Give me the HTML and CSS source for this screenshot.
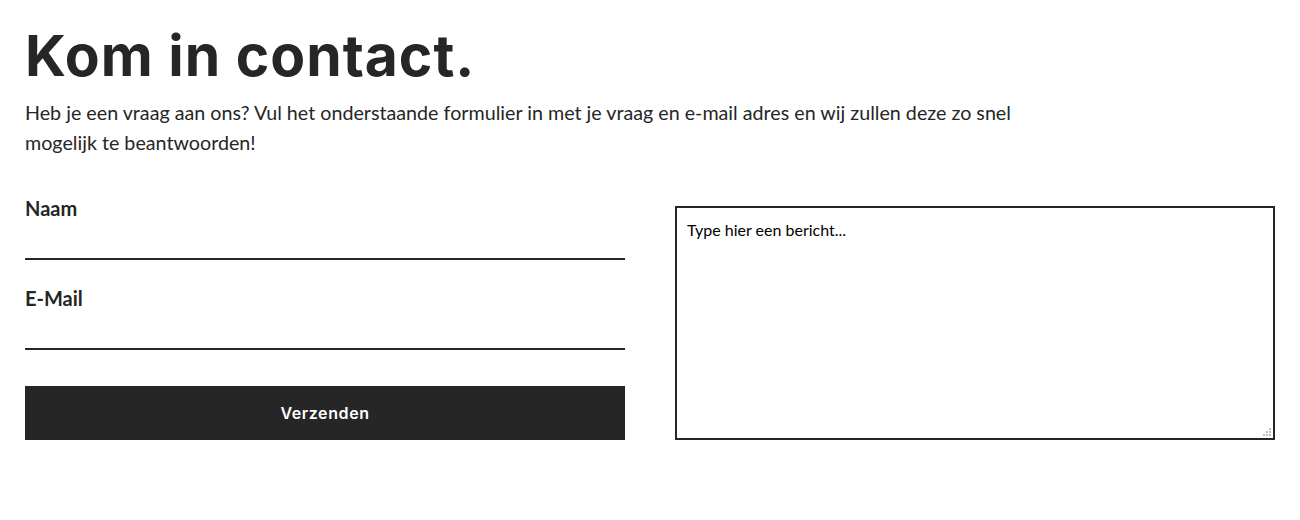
FILE: index.html
```html
<!DOCTYPE html>
<html lang="nl">
<head>
<meta charset="utf-8">
<title>Kom in contact.</title>
<link rel="stylesheet" href="styles.css">
</head>
<body>
<main class="contact">
  <h1 class="title">Kom in contact.</h1>
  <p class="intro">Heb je een vraag aan ons? Vul het onderstaande formulier in met je vraag en e-mail adres en wij zullen deze zo snel mogelijk te beantwoorden!</p>
  <form class="form">
    <div class="fields">
      <label class="field">
        <span class="label">Naam</span>
        <input class="input" type="text">
      </label>
      <label class="field">
        <span class="label">E-Mail</span>
        <input class="input" type="email">
      </label>
      <button class="submit" type="button">Verzenden</button>
    </div>
    <div class="message-wrap">
      <textarea class="message" placeholder="Type hier een bericht..."></textarea>
      <svg class="grip" width="8" height="8" viewBox="0 0 8 8" aria-hidden="true">
        <rect x="6" y="0" width="2" height="2" fill="#bdbdbd"/>
        <rect x="3" y="3" width="2" height="2" fill="#bdbdbd"/>
        <rect x="6" y="3" width="2" height="2" fill="#bdbdbd"/>
        <rect x="0" y="6" width="2" height="2" fill="#bdbdbd"/>
        <rect x="3" y="6" width="2" height="2" fill="#bdbdbd"/>
        <rect x="6" y="6" width="2" height="2" fill="#bdbdbd"/>
      </svg>
    </div>
  </form>
</main>
</body>
</html>
```
FILE: styles.css
```css
* { box-sizing: border-box; }
html, body { margin: 0; background: #fff; }
body { font-family: Lato, "Liberation Sans", sans-serif; color: #262626; }
.contact { padding: 24px 25px 0; }
.title {
  margin: 0;
  font-family: Inter, "Open Sans", sans-serif;
  font-weight: 700;
  font-size: 57px;
  line-height: 64px;
  letter-spacing: 1px;
}
.intro {
  margin: 10px 0 0;
  max-width: 1030px;
  font-size: 19.7px;
  line-height: 30px;
}
.form {
  margin-top: 38px;
  display: grid;
  grid-template-columns: 600px 600px;
  gap: 50px;
}
.fields { display: flex; flex-direction: column; }
.field { display: flex; flex-direction: column; }
.label { font-weight: 700; font-size: 20px; line-height: 24px; }
.input {
  border: 0;
  border-bottom: 2px solid #262626;
  height: 40px;
  outline: none;
  font: inherit;
  margin-bottom: 26px;
}
.submit {
  margin-top: 10px;
  height: 54px;
  border: 0;
  background: #262626;
  color: #fff;
  font-family: Inter, sans-serif;
  font-weight: 600;
  font-size: 16px;
  letter-spacing: 0.6px;
}
.message-wrap {
  position: relative;
  margin-top: 10px;
  height: 234px;
}
.message {
  display: block;
  width: 100%;
  height: 100%;
  border: 2px solid #262626;
  padding: 12px 10px;
  font-family: Lato, sans-serif;
  font-size: 16px;
  color: #000;
  resize: none;
  outline: none;
}
.message::placeholder { color: #000; opacity: 1; }
.grip { position: absolute; right: 4px; bottom: 4px; }
```
